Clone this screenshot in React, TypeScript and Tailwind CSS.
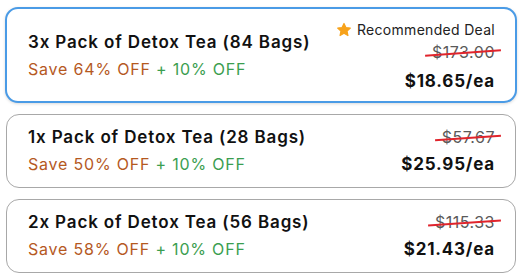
import React from 'react'

type Deal = {
    qty: string
    bags: number
    save: number
    was: string
    price: string
    recommended?: boolean
}

const deals: Deal[] = [
    { qty: '3x', bags: 84, save: 64, was: '$173.00', price: '$18.65', recommended: true },
    { qty: '1x', bags: 28, save: 50, was: '$57.67', price: '$25.95' },
    { qty: '2x', bags: 56, save: 58, was: '$115.33', price: '$21.43' },
]

function StarIcon() {
    return (
        <svg width="16" height="16" viewBox="0 0 24 24" className="shrink-0">
            <path
                d="M12 2.2l2.9 6.1 6.6.8-4.9 4.6 1.3 6.6L12 17l-5.9 3.3 1.3-6.6-4.9-4.6 6.6-.8z"
                fill="#f7a21b"
                stroke="#f7a21b"
                strokeWidth="1.8"
                strokeLinejoin="round"
            />
        </svg>
    )
}

function DealCard({ deal }: { deal: Deal }) {
    const selected = deal.recommended
    return (
        <div
            className={
                selected
                    ? 'flex items-center justify-between rounded-[13px] border-2 border-[#4a9be6] bg-white pl-[21px] pr-[20px] pt-[8px] pb-[6px] shadow-[0_1px_3px_rgba(0,0,0,0.15)]'
                    : 'mx-px flex items-center justify-between rounded-[13px] border border-[#a8a8a8] bg-white pl-[21px] pr-[20px] py-[9px]'
            }
        >
            <div className="flex flex-col">
                <span className="text-[17px] font-semibold leading-[27px] tracking-[0.85px] text-[#111]">
                    {deal.qty} Pack of Detox Tea ({deal.bags} Bags)
                </span>
                <span className="text-[16px] leading-[27px] tracking-[0.8px]">
                    <span className="text-[#b5591f]">Save {deal.save}% OFF</span>{' '}
                    <span className="text-[#3b9e50]">+ 10% OFF</span>
                </span>
            </div>
            <div className="flex flex-col items-end">
                {selected && (
                    <div className="mb-[-4px] flex items-center gap-[5px] text-[14px] leading-[26px] tracking-[0.3px] text-[#222]">
                        <StarIcon />
                        Recommended Deal
                    </div>
                )}
                <span className="relative text-[16px] leading-[27px] tracking-[0.5px] text-[#5a5a5a]">
                    {deal.was}
                    <span className="absolute left-[-7px] right-[-6px] top-[13px] h-[1.5px] -rotate-[4deg] bg-[#e0242c]" />
                </span>
                <span
                    className={
                        'text-[17px] font-bold leading-[27px] tracking-[0.8px] text-[#111]' +
                        (selected ? ' mt-[2px]' : '')
                    }
                >
                    {deal.price}/ea
                </span>
            </div>
        </div>
    )
}

export default function App() {
    return (
        <div
            className="flex w-[522px] flex-col gap-[11px] bg-white px-[5px] pt-[7px]"
            style={{ fontFamily: 'Inter, "Noto Sans", sans-serif' }}
        >
            {deals.map(d => (
                <DealCard key={d.qty} deal={d} />
            ))}
        </div>
    )
}
